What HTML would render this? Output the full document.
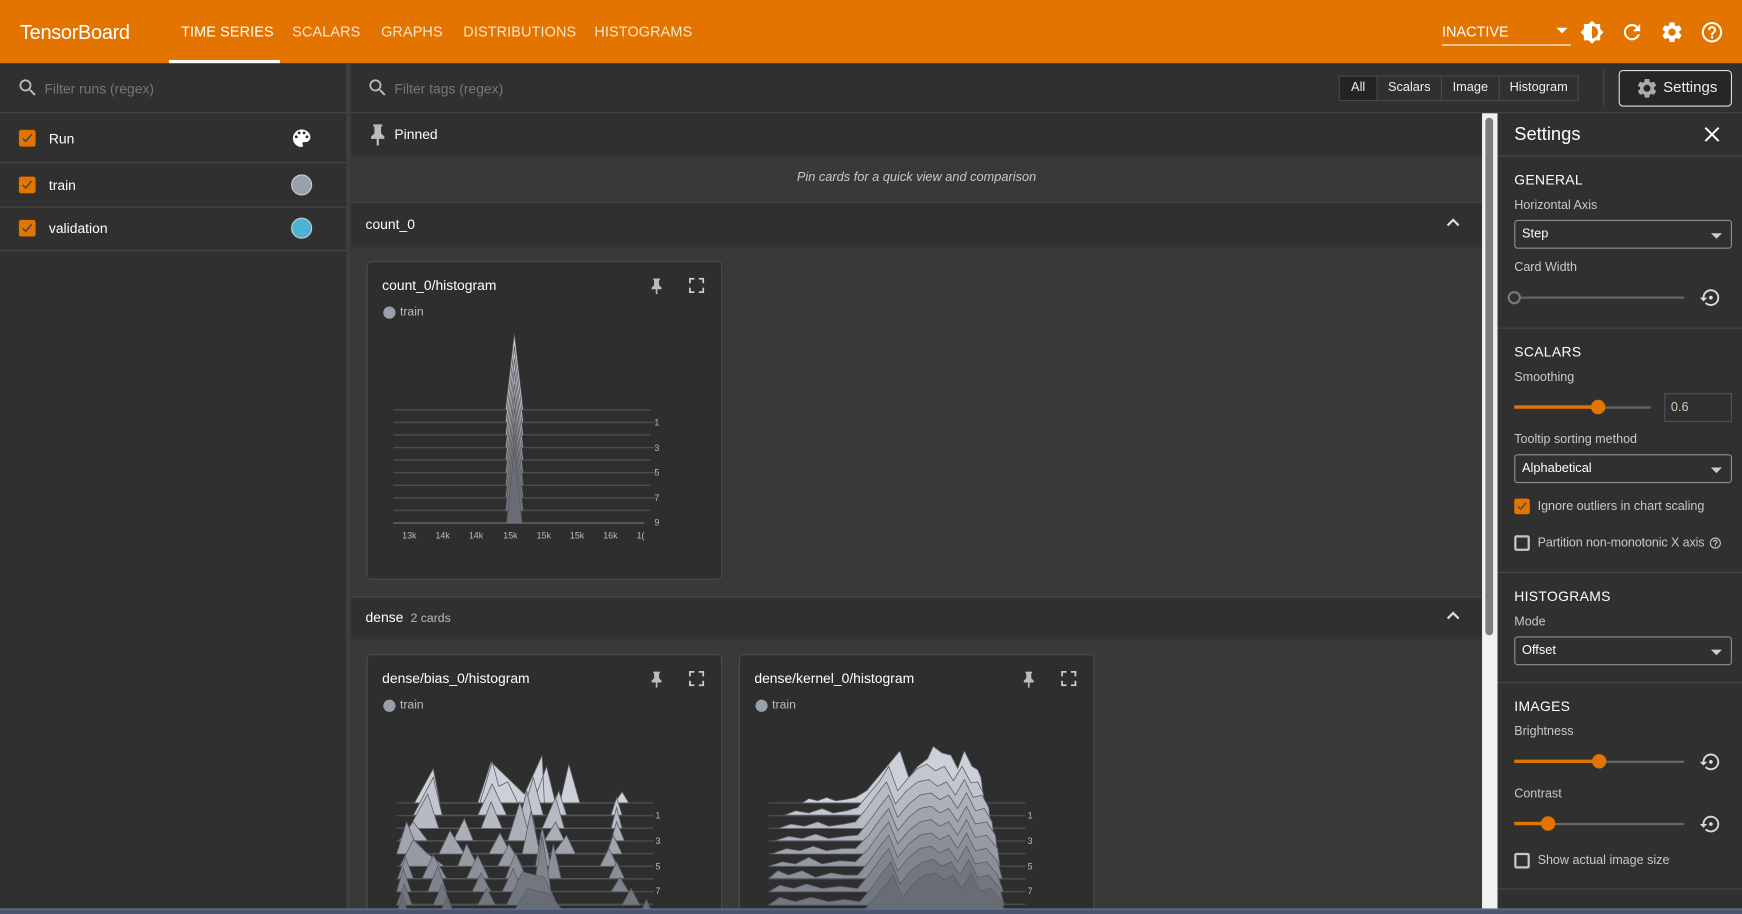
<!DOCTYPE html>
<html><head><meta charset="utf-8">
<style>
*{box-sizing:border-box;margin:0;padding:0}
html,body{width:1742px;height:914px;overflow:hidden;background:#303030;font-family:"Liberation Sans",Arial,sans-serif;color:#fff}
#w{position:absolute;left:0;top:0;width:1568px;height:823px;transform:scale(1.11097,1.11057);transform-origin:0 0;background:#303030;overflow:hidden}
.a{position:absolute}
.hdr{left:0;top:0;width:1568px;height:57px;background:#e37400}
.tab{top:21px;font-size:13px;color:#fbe3cc;letter-spacing:.1px}
.ic{fill:#fff}
.t13{font-size:12.5px}
.hl{background:#474747;height:1px}
.sec{background:#303030}
.cb{width:15px;height:15px;background:#e37400;border-radius:2px}
.cb svg{position:absolute;left:2px;top:2px}
.ecb{width:14px;height:14px;border:2px solid #c8c8c8;border-radius:2px}
.card{background:#2e2e2e;border:1px solid #4a4a4a;border-radius:4px}
.lbl{font-size:11.3px;color:#c8c8c8}
.sh{font-size:12.5px;color:#fff;letter-spacing:.3px}
.sel{border:1px solid #8a8f9a;border-radius:3px;height:26px;font-size:11.5px;padding:6px 6px;color:#fff}
.sel:after{content:"";position:absolute;right:8px;top:11px;border-left:5px solid transparent;border-right:5px solid transparent;border-top:5px solid #ccc}
.btn{top:68px;height:23px;border:1px solid #4a4a4a;font-size:11.5px;color:#eee;text-align:center;line-height:21px;background:#303030}
</style></head><body><div id="w">

<div class="a hdr"></div>
<div class="a" style="left:18px;top:19px;font-size:18px;color:#fff;letter-spacing:-.3px">TensorBoard</div>
<div class="a tab" style="left:163px;color:#fff">TIME SERIES</div>
<div class="a" style="left:152px;top:54px;width:100px;height:3px;background:#fff"></div>
<div class="a tab" style="left:263px">SCALARS</div>
<div class="a tab" style="left:343px">GRAPHS</div>
<div class="a tab" style="left:417px">DISTRIBUTIONS</div>
<div class="a tab" style="left:535px">HISTOGRAMS</div>
<div class="a" style="left:1298px;top:21px;font-size:13px">INACTIVE</div>
<div class="a" style="left:1298px;top:40px;width:116px;height:1px;background:#fff"></div>
<div class="a" style="left:1401px;top:25px;border-left:5px solid transparent;border-right:5px solid transparent;border-top:5px solid #fff"></div>
<svg class="a" style="left:1422px;top:18px" width="22" height="22" viewBox="0 0 24 24"><path class="ic" d="M20 8.690V4h-4.69L12 .69 8.69 4H4v4.69L.69 12 4 15.31V20h4.69L12 23.31 15.31 20H20v-4.69L23.31 12 20 8.69zM12 18V6c3.31 0 6 2.69 6 6s-2.690 6-6 6z"/></svg>
<svg class="a" style="left:1458px;top:18px" width="22" height="22" viewBox="0 0 24 24"><path class="ic" d="M17.65 6.35A7.96 7.96 0 0 0 12 4a8 8 0 1 0 7.73 10h-2.08A6 6 0 1 1 12 6c1.66 0 3.14.69 4.22 1.78L13 11h7V4l-2.35 2.35z"/></svg>
<svg class="a" style="left:1494px;top:18px" width="22" height="22" viewBox="0 0 24 24"><path class="ic" d="M19.14 12.94c.04-.3.06-.61.06-.94 0-.32-.02-.64-.07-.94l2.030-1.58a.49.49 0 0 0 .12-.61l-1.92-3.32a.49.49 0 0 0-.59-.22l-2.39.96c-.5-.38-1.03-.7-1.62-.94l-.36-2.54a.48.48 0 0 0-.48-.41h-3.84c-.24 0-.43.17-.47.41l-.36 2.54c-.59.24-1.13.57-1.62.94l-2.39-.96a.48.48 0 0 0-.59.22L2.74 8.87a.47.47 0 0 0 .12.61l2.03 1.58c-.05.3-.09.63-.09.94s.2.64.07.94l-2.03 1.58a.49.49 0 0 0-.12.61l1.92 3.32c.12.22.37.29.59.22l2.39-.96c.5.38 1.03.7 1.62.94l.36 2.54c.05.24.24.41.48.41h3.84c.24 0 .44-.17.47-.41l.36-2.54c.59-.24 1.13-.56 1.62-.94l2.39.96c.22.08.47 0 .59-.22l1.92-3.32a.47.47 0 0 0-.12-.61l-2.01-1.58zM12 15.6A3.6 3.6 0 1 1 12 8.4a3.6 3.6 0 0 1 0 7.2z"/></svg>
<svg class="a" style="left:1530px;top:18px" width="22" height="22" viewBox="0 0 24 24"><path class="ic" d="M11 18h2v-2h-2v2zm1-16C6.48 2 2 6.48 2 12s4.48 10 10 10 10-4.48 10-10S17.52 2 12 2zm0 18c-4.41 0-8-3.59-8-8s3.59-8 8-8 8 3.59 8 8-3.59 8-8 8zm0-14a4 4 0 0 0-4 4h2c0-1.1.9-2 2-2s2 .9 2 2c0 2-3 1.75-3 5h2c0-2.25 3-2.5 3-5a4 4 0 0 0-4-4z"/></svg>

<div class="a" style="left:0;top:57px;width:312px;height:766px;background:#303030"></div>
<div class="a" style="left:312px;top:57px;width:4px;height:766px;background:#3c3c3c;border-left:1px solid #444"></div>
<svg class="a" style="left:15px;top:69px" width="20" height="20" viewBox="0 0 24 24"><path fill="#bbb" d="M15.5 14h-.79l-.28-.27A6.47 6.47 0 0 0 16 9.5 6.5 6.5 0 1 0 9.5 16c1.61 0 3.09-.59 4.23-1.57l.27.28v.79l5 4.99L20.49 19l-4.99-5zm-6 0C7.01 14 5 11.99 5 9.5S7.01 5 9.5 5 14 7.01 14 9.5 11.990 14 9.5 14z"/></svg>
<div class="a t13" style="left:40px;top:73px;color:#777">Filter runs (regex)</div>
<div class="a hl" style="left:0;top:101px;width:312px"></div>
<div class="a cb" style="left:17px;top:117px"><svg width="11" height="11" viewBox="0 0 12 12"><path d="M1.5 6l3 3 6-7" stroke="#444" stroke-width="1.4" fill="none"/></svg></div>
<div class="a t13" style="left:44px;top:118px">Run</div>
<svg class="a" style="left:261px;top:114px" width="21" height="21" viewBox="0 0 24 24"><path fill="#fff" d="M12 3a9 9 0 0 0 0 18c.83 0 1.5-.67 1.5-1.5 0-.39-.15-.74-.39-1.01-.23-.26-.38-.61-.38-.99 0-.83.67-1.5 1.5-1.5H16c2.76 0 5-2.24 5-5 0-4.42-4.03-8-9-8zm-5.5 9a1.5 1.5 0 1 1 0-3 1.5 1.5 0 0 1 0 3zm3-4a1.5 1.5 0 1 1 0-3 1.5 1.5 0 0 1 0 3zm5 0a1.5 1.5 0 1 1 0-3 1.5 1.5 0 0 1 0 3zm3 4a1.5 1.5 0 1 1 0-3 1.5 1.5 0 0 1 0 3z"/></svg>
<div class="a hl" style="left:0;top:146px;width:312px"></div>
<div class="a cb" style="left:17px;top:159px"><svg width="11" height="11" viewBox="0 0 12 12"><path d="M1.5 6l3 3 6-7" stroke="#444" stroke-width="1.4" fill="none"/></svg></div>
<div class="a t13" style="left:44px;top:160px">train</div>
<div class="a" style="left:262px;top:157px;width:19px;height:19px;border-radius:50%;background:#9aa0ab;border:1px solid #ccc"></div>
<div class="a hl" style="left:0;top:186px;width:312px"></div>
<div class="a cb" style="left:17px;top:198px"><svg width="11" height="11" viewBox="0 0 12 12"><path d="M1.5 6l3 3 6-7" stroke="#444" stroke-width="1.4" fill="none"/></svg></div>
<div class="a t13" style="left:44px;top:199px">validation</div>
<div class="a" style="left:262px;top:196px;width:19px;height:19px;border-radius:50%;background:#4cb3d4;border:1px solid #ccc"></div>
<div class="a hl" style="left:0;top:225px;width:312px"></div>

<div class="a" style="left:316px;top:57px;width:1252px;height:44px;background:#303030"></div>
<svg class="a" style="left:330px;top:69px" width="20" height="20" viewBox="0 0 24 24"><path fill="#bbb" d="M15.5 14h-.79l-.28-.27A6.47 6.47 0 0 0 16 9.5 6.5 6.5 0 1 0 9.5 16c1.61 0 3.09-.59 4.23-1.57l.27.28v.79l5 4.99L20.49 19l-4.99-5zm-6 0C7.01 14 5 11.99 5 9.5S7.01 5 9.5 5 14 7.01 14 9.5 11.99 14 9.5 14z"/></svg>
<div class="a t13" style="left:355px;top:73px;color:#777">Filter tags (regex)</div>
<div class="a btn" style="left:1205px;width:35px;background:#232323">All</div>
<div class="a btn" style="left:1239px;width:59px">Scalars</div>
<div class="a btn" style="left:1297px;width:53px">Image</div>
<div class="a btn" style="left:1349px;width:72px">Histogram</div>
<div class="a" style="left:1443px;top:63px;width:1px;height:32px;background:#4a4a4a"></div>
<div class="a" style="left:1457px;top:63px;width:102px;height:33px;border:1px solid #ddd;border-radius:4px;background:#262626"></div>
<svg class="a" style="left:1472px;top:69px" width="21" height="21" viewBox="0 0 24 24"><path fill="#aaa" d="M19.14 12.94c.04-.3.06-.61.06-.94 0-.32-.02-.64-.07-.94l2.03-1.58a.49.49 0 0 0 .12-.61l-1.92-3.32a.49.49 0 0 0-.59-.22l-2.39.96c-.5-.38-1.03-.7-1.62-.94l-.36-2.54a.48.48 0 0 0-.48-.41h-3.84c-.24 0-.43.17-.47.41l-.36 2.54c-.59.24-1.13.57-1.62.94l-2.39-.96a.48.48 0 0 0-.59.22L2.74 8.87a.47.47 0 0 0 .12.61l2.03 1.58c-.05.3-.09.63-.09.94s.2.64.07.94l-2.03 1.58a.49.49 0 0 0-.12.61l1.92 3.32c.12.22.37.29.59.22l2.39-.96c.5.38 1.03.7 1.62.94l.36 2.54c.05.24.24.41.48.41h3.84c.24 0 .44-.17.47-.41l.36-2.54c.59-.24 1.13-.56 1.62-.94l2.39.96c.22.08.47 0 .59-.22l1.92-3.32a.47.47 0 0 0-.12-.61l-2.01-1.58zM12 15.6A3.6 3.6 0 1 1 12 8.4a3.6 3.6 0 0 1 0 7.2z"/></svg>
<div class="a" style="left:1497px;top:71px;font-size:13.5px;color:#eee">Settings</div>
<div class="a hl" style="left:316px;top:101px;width:1252px"></div>

<div class="a" style="left:316px;top:102px;width:1018px;height:721px;background:#393939"></div>
<div class="a sec" style="left:316px;top:102px;width:1018px;height:38px"></div>
<svg class="a" style="left:332px;top:111px" width="16" height="20" viewBox="0 0 16 20"><path fill="#bbb" d="M4 1h8v2h-1v6l3 3v2H9v6H7v-6H2v-2l3-3V3H4z"/></svg>
<div class="a t13" style="left:355px;top:114px">Pinned</div>
<div class="a" style="left:316px;top:140px;width:1018px;height:3px;background:#353535"></div>
<div class="a" style="left:316px;top:154px;width:1018px;text-align:center;font-size:11.5px;font-style:italic;color:#c8c8c8">Pin cards for a quick view and comparison</div>
<div class="a hl" style="left:316px;top:182px;width:1018px"></div>
<div class="a sec" style="left:316px;top:183px;width:1018px;height:37px"></div>
<div class="a t13" style="left:329px;top:195px">count_0</div>
<svg class="a" style="left:1301px;top:194px" width="14" height="12" viewBox="0 0 14 12"><path d="M2 9l5-5 5 5" stroke="#ddd" stroke-width="2" fill="none"/></svg>
<div class="a" style="left:316px;top:220px;width:1018px;height:3px;background:#343434"></div>

<div class="a card" style="left:330px;top:235px;width:320px;height:287px"></div>
<div class="a t13" style="left:344px;top:250px">count_0/histogram</div>
<svg class="a" style="left:585px;top:250px" width="12" height="15" viewBox="0 0 16 20"><path fill="#bbb" d="M4 1h8v2h-1v6l3 3v2H9v6H7v-6H2v-2l3-3V3H4z"/></svg>
<svg class="a" style="left:620px;top:250px" width="14" height="14" viewBox="0 0 14 14"><path d="M1 5V1h4M9 1h4v4M13 9v4H9M5 13H1V9" stroke="#ccc" stroke-width="1.6" fill="none"/></svg>
<div class="a" style="left:345px;top:276px;width:11px;height:11px;border-radius:50%;background:#9aa0ab"></div>
<div class="a" style="left:360px;top:275px;font-size:11px;color:#bbb">train</div>
<svg class="a" style="left:330px;top:290px" width="320" height="210" viewBox="330 290 320 210">
<g stroke="#4c4c4c" stroke-width="1.3">
<line x1="354" y1="369" x2="586" y2="369"/><line x1="354" y1="380.3" x2="590" y2="380.3"/><line x1="354" y1="391.6" x2="586" y2="391.6"/><line x1="354" y1="403" x2="590" y2="403"/><line x1="354" y1="414.3" x2="586" y2="414.3"/><line x1="354" y1="425.6" x2="590" y2="425.6"/><line x1="354" y1="437" x2="586" y2="437"/><line x1="354" y1="448.3" x2="590" y2="448.3"/><line x1="354" y1="459.6" x2="586" y2="459.6"/>
</g>
<g stroke="#555" stroke-width=".6">
<path fill="#c9ccd4" d="M455,369 L463,300 L471,369Z"/>
<path fill="#bfc3cb" d="M455,380 L463,312 L471,380Z"/>
<path fill="#b3b7c0" d="M455,392 L463,323 L471,392Z"/>
<path fill="#a8acb5" d="M455,403 L463,334 L471,403Z"/>
<path fill="#9da1aa" d="M455,414 L463,346 L471,414Z"/>
<path fill="#92969f" d="M455,426 L463,357 L471,426Z"/>
<path fill="#878b94" d="M455,437 L463,368 L471,437Z"/>
<path fill="#7c8089" d="M455,448 L463,380 L471,448Z"/>
<path fill="#72767f" d="M455,460 L463,391 L471,460Z"/>
<path fill="#686c75" d="M456,471 L463,402 L470,471Z"/>
</g>
<line x1="354" y1="471" x2="580" y2="471" stroke="#777"/>
<g fill="#bbb" font-size="8" font-family="Liberation Sans">
<text x="589" y="383">1</text><text x="589" y="406">3</text><text x="589" y="428">5</text><text x="589" y="451">7</text><text x="589" y="473">9</text>
<text x="362" y="485">13k</text><text x="392" y="485">14k</text><text x="422" y="485">14k</text><text x="453" y="485">15k</text><text x="483" y="485">15k</text><text x="513" y="485">15k</text><text x="543" y="485">16k</text><text x="573" y="485">1(</text>
</g>
</svg>

<div class="a hl" style="left:316px;top:537px;width:1018px"></div>
<div class="a sec" style="left:316px;top:538px;width:1018px;height:36px"></div>
<div class="a t13" style="left:329px;top:549px">dense <span style="font-size:11px;color:#bbb">&nbsp;2 cards</span></div>
<svg class="a" style="left:1301px;top:548px" width="14" height="12" viewBox="0 0 14 12"><path d="M2 9l5-5 5 5" stroke="#ddd" stroke-width="2" fill="none"/></svg>
<div class="a" style="left:316px;top:574px;width:1018px;height:3px;background:#343434"></div>

<div class="a card" style="left:330px;top:589px;width:320px;height:250px"></div>
<div class="a t13" style="left:344px;top:604px">dense/bias_0/histogram</div>
<svg class="a" style="left:585px;top:604px" width="12" height="15" viewBox="0 0 16 20"><path fill="#bbb" d="M4 1h8v2h-1v6l3 3v2H9v6H7v-6H2v-2l3-3V3H4z"/></svg>
<svg class="a" style="left:620px;top:604px" width="14" height="14" viewBox="0 0 14 14"><path d="M1 5V1h4M9 1h4v4M13 9v4H9M5 13H1V9" stroke="#ccc" stroke-width="1.6" fill="none"/></svg>
<div class="a" style="left:345px;top:630px;width:11px;height:11px;border-radius:50%;background:#9aa0ab"></div>
<div class="a" style="left:360px;top:629px;font-size:11px;color:#bbb">train</div>

<div class="a card" style="left:665px;top:589px;width:320px;height:250px"></div>
<div class="a t13" style="left:679px;top:604px">dense/kernel_0/histogram</div>
<svg class="a" style="left:920px;top:604px" width="12" height="15" viewBox="0 0 16 20"><path fill="#bbb" d="M4 1h8v2h-1v6l3 3v2H9v6H7v-6H2v-2l3-3V3H4z"/></svg>
<svg class="a" style="left:955px;top:604px" width="14" height="14" viewBox="0 0 14 14"><path d="M1 5V1h4M9 1h4v4M13 9v4H9M5 13H1V9" stroke="#ccc" stroke-width="1.6" fill="none"/></svg>
<div class="a" style="left:680px;top:630px;width:11px;height:11px;border-radius:50%;background:#9aa0ab"></div>
<div class="a" style="left:695px;top:629px;font-size:11px;color:#bbb">train</div>

<svg class="a" style="left:330px;top:650px" width="680" height="173" viewBox="330 650 680 173">
<g stroke="#4c4c4c" stroke-width="1.3">
<line x1="357" y1="723" x2="588" y2="723"/><line x1="357" y1="734.4" x2="588" y2="734.4"/><line x1="357" y1="745.8" x2="588" y2="745.8"/><line x1="357" y1="757.2" x2="588" y2="757.2"/><line x1="357" y1="768.6" x2="588" y2="768.6"/><line x1="357" y1="780" x2="588" y2="780"/><line x1="357" y1="791.4" x2="588" y2="791.4"/><line x1="357" y1="802.8" x2="588" y2="802.8"/><line x1="357" y1="814.2" x2="588" y2="814.2"/>
<line x1="692" y1="723" x2="923" y2="723"/><line x1="692" y1="734.4" x2="923" y2="734.4"/><line x1="692" y1="745.8" x2="923" y2="745.8"/><line x1="692" y1="757.2" x2="923" y2="757.2"/><line x1="692" y1="768.6" x2="923" y2="768.6"/><line x1="692" y1="780" x2="923" y2="780"/><line x1="692" y1="791.4" x2="923" y2="791.4"/><line x1="692" y1="802.8" x2="923" y2="802.8"/><line x1="692" y1="814.2" x2="923" y2="814.2"/>
</g>
<g stroke="#5a5d64" stroke-width=".7">
<path fill="#ccd0d8" d="M373,723 L390,692 L396,723 L432,723 L443,686 L449,708 L457,704 L466,723 L480,723 L484,712 L492,690 L500,723 L504,723 L512,688 L522,723 L553,723 L560,713 L566,723Z M430,723 L442,686 L472,715 L488,680 L490,723Z"/>
<path fill="#c2c6cf" d="M372,734 L390,700 L398,734 L430,734 L443,706 L456,734 L470,734 L480,700 L489,734 L494,734 L503,712 L510,734 L550,734 L555,718 L560,734Z"/>
<path fill="#b6bac3" d="M368,746 L385,715 L395,746 L433,746 L442,722 L452,746 L466,746 L474,712 L482,746 L488,746 L500,718 L508,746 L550,746 L555,727 L560,746Z"/>
<path fill="#abafb8" d="M359,757 L372,740 L385,757 L408,757 L418,737 L426,757 L457,757 L468,722 L478,757 L490,757 L500,740 L508,757 L550,757 L555,740 L562,757Z"/>
<path fill="#a0a4ad" d="M357,769 L366,740 L378,769 L395,769 L405,748 L418,769 L440,769 L450,750 L460,769 L470,769 L478,730 L486,769 L498,769 L510,752 L518,769 L546,769 L552,752 L560,769Z"/>
<path fill="#959aa3" d="M360,780 L372,756 L384,768 L400,780 L412,780 L420,760 L430,780 L448,780 L458,760 L470,780 L482,780 L488,745 L496,780 L540,780 L548,764 L556,780Z"/>
<path fill="#8a8f98" d="M358,791 L365,772 L372,791 L380,791 L390,770 L402,791 L420,791 L430,770 L440,791 L455,791 L464,768 L474,791 L492,791 L498,760 L505,791 L548,791 L555,776 L562,791Z"/>
<path fill="#7f848d" d="M357,803 L363,782 L370,803 L385,803 L394,780 L402,803 L425,803 L433,786 L442,803 L452,803 L462,782 L470,803 L480,803 L488,752 L496,803 L550,803 L558,790 L566,803Z"/>
<path fill="#72777f" d="M357,815 L364,796 L371,815 L390,815 L398,796 L406,815 L430,815 L438,800 L446,815 L456,815 L470,785 L490,790 L502,815 L560,815 L568,800 L576,815Z"/>
<path fill="#686d75" d="M357,825 L362,805 L368,825 L395,825 L402,808 L410,825 L460,825 L475,800 L495,805 L510,825 L575,825 L582,810 L588,825Z"/>
</g>
<g stroke="#5a5d64" stroke-width=".7">
<path fill="#ccd0d8" d="M722,723 L728,719 L736,721 L744,718 L752,721 L760,720 L770,718 L780,712 L790,700 L800,688 L810,676 L818,700 L826,690 L835,683 L840,672 L848,678 L856,680 L862,692 L868,676 L875,690 L880,693 L883,700 L886,723Z"/>
<path fill="#c2c6cf" d="M706,734 L716,730 L728,732 L740,728 L750,732 L762,730 L772,727 L782,715 L792,703 L800,690 L808,712 L818,700 L826,692 L834,688 L842,694 L850,690 L858,703 L866,690 L874,705 L880,704 L885,714 L888,734Z"/>
<path fill="#b6bac3" d="M700,746 L712,742 L724,744 L736,740 L746,744 L760,742 L770,740 L780,728 L790,714 L798,704 L806,724 L816,712 L826,704 L836,702 L844,708 L852,704 L860,716 L868,702 L876,718 L884,716 L890,727 L892,746Z"/>
<path fill="#abafb8" d="M697,757 L710,753 L722,755 L734,751 L746,755 L760,753 L772,752 L782,740 L792,726 L800,716 L808,736 L818,724 L828,716 L838,714 L846,720 L854,716 L862,728 L870,714 L878,730 L886,728 L893,740 L895,757Z"/>
<path fill="#a0a4ad" d="M694,769 L708,764 L720,766 L732,762 L744,766 L758,764 L770,764 L782,752 L792,738 L800,728 L808,748 L818,736 L828,728 L838,726 L846,732 L854,728 L862,740 L870,726 L878,742 L888,740 L896,752 L898,769Z"/>
<path fill="#959aa3" d="M692,780 L704,776 L716,778 L728,772 L740,778 L756,775 L770,776 L782,764 L792,750 L800,740 L808,760 L818,748 L828,740 L838,738 L846,744 L854,740 L862,752 L870,738 L878,754 L888,752 L898,764 L900,780Z"/>
<path fill="#8a8f98" d="M692,791 L700,784 L710,788 L722,784 L734,790 L748,786 L760,788 L772,788 L782,776 L792,762 L800,752 L808,772 L818,760 L828,752 L838,750 L846,756 L854,752 L862,764 L870,750 L878,766 L888,764 L898,776 L902,791Z"/>
<path fill="#7f848d" d="M692,803 L702,797 L714,800 L726,796 L740,800 L756,798 L772,800 L782,788 L792,774 L800,764 L808,784 L818,772 L828,764 L838,762 L846,768 L854,764 L862,776 L870,762 L878,778 L888,776 L898,788 L903,803Z"/>
<path fill="#72777f" d="M692,815 L702,808 L716,812 L730,808 L746,812 L760,810 L774,812 L784,800 L794,786 L802,776 L810,796 L820,784 L830,776 L840,774 L848,780 L856,776 L864,788 L872,774 L880,790 L890,788 L900,800 L904,815Z"/>
<path fill="#686d75" d="M692,826 L704,820 L720,822 L740,820 L760,822 L776,822 L786,810 L796,798 L804,788 L812,808 L822,796 L832,788 L842,786 L850,792 L858,788 L866,800 L874,786 L882,802 L892,800 L902,812 L905,826Z"/>
</g>
<g fill="#bbb" font-size="8" font-family="Liberation Sans">
<text x="590" y="737">1</text><text x="590" y="760">3</text><text x="590" y="783">5</text><text x="590" y="805">7</text>
<text x="925" y="737">1</text><text x="925" y="760">3</text><text x="925" y="783">5</text><text x="925" y="805">7</text>
</g>
</svg>

<div class="a" style="left:1334px;top:102px;width:14px;height:721px;background:#f1f1f1"></div>
<div class="a" style="left:1337px;top:106px;width:7px;height:466px;border-radius:4px;background:#7c7c7c"></div>

<div class="a" style="left:1348px;top:102px;width:220px;height:721px;background:#303030"></div>
<div class="a" style="left:1363px;top:112px;font-size:16.5px">Settings</div>
<svg class="a" style="left:1533px;top:113px" width="16" height="16" viewBox="0 0 16 16"><path d="M2 2l12 12M14 2L2 14" stroke="#fff" stroke-width="1.8"/></svg>
<div class="a hl" style="left:1348px;top:140px;width:220px"></div>
<div class="a sh" style="left:1363px;top:155px">GENERAL</div>
<div class="a lbl" style="left:1363px;top:179px">Horizontal Axis</div>
<div class="a sel" style="left:1363px;top:198px;width:196px">Step</div>
<div class="a lbl" style="left:1363px;top:235px">Card Width</div>
<div class="a" style="left:1363px;top:267px;width:153px;height:2px;background:#666"></div>
<div class="a" style="left:1357px;top:262px;width:12px;height:12px;border-radius:50%;border:2px solid #777;background:#303030"></div>
<svg class="a" style="left:1530px;top:258px" width="20" height="20" viewBox="0 0 24 24"><path fill="#ddd" d="M12 3a9 9 0 0 0-9 9H0l4 4 4-4H5a7 7 0 1 1 2.05 4.95l-1.42 1.42A9 9 0 1 0 12 3zm2 9a2 2 0 1 0-4 0 2 2 0 0 0 4 0z"/></svg>
<div class="a hl" style="left:1348px;top:295px;width:220px"></div>
<div class="a sh" style="left:1363px;top:310px">SCALARS</div>
<div class="a lbl" style="left:1363px;top:334px">Smoothing</div>
<div class="a" style="left:1363px;top:366px;width:123px;height:2px;background:#666"></div>
<div class="a" style="left:1363px;top:365px;width:75px;height:3px;background:#e37400"></div>
<div class="a" style="left:1432px;top:360px;width:13px;height:13px;border-radius:50%;background:#e37400"></div>
<div class="a" style="left:1498px;top:354px;width:61px;height:26px;border:1px solid #4a5366;font-size:11.5px;color:#ccc;padding:6px 5px">0.6</div>
<div class="a lbl" style="left:1363px;top:390px">Tooltip sorting method</div>
<div class="a sel" style="left:1363px;top:409px;width:196px">Alphabetical</div>
<div class="a cb" style="left:1363px;top:449px;width:14px;height:14px"><svg width="10" height="10" viewBox="0 0 12 12"><path d="M1.5 6l3 3 6-7" stroke="#444" stroke-width="1.4" fill="none"/></svg></div>
<div class="a lbl" style="left:1384px;top:450px">Ignore outliers in chart scaling</div>
<div class="a ecb" style="left:1363px;top:482px"></div>
<div class="a lbl" style="left:1384px;top:483px;letter-spacing:-.1px">Partition non-monotonic X axis</div>
<svg class="a" style="left:1538px;top:483px" width="12" height="12" viewBox="0 0 24 24"><path fill="#ccc" d="M11 18h2v-2h-2v2zm1-16C6.48 2 2 6.48 2 12s4.48 10 10 10 10-4.48 10-10S17.52 2 12 2zm0 18c-4.41 0-8-3.59-8-8s3.59-8 8-8 8 3.59 8 8-3.59 8-8 8zm0-14a4 4 0 0 0-4 4h2c0-1.1.9-2 2-2s2 .9 2 2c0 2-3 1.75-3 5h2c0-2.25 3-2.5 3-5a4 4 0 0 0-4-4z"/></svg>
<div class="a hl" style="left:1348px;top:515px;width:220px"></div>
<div class="a sh" style="left:1363px;top:530px">HISTOGRAMS</div>
<div class="a lbl" style="left:1363px;top:554px">Mode</div>
<div class="a sel" style="left:1363px;top:573px;width:196px">Offset</div>
<div class="a hl" style="left:1348px;top:614px;width:220px"></div>
<div class="a sh" style="left:1363px;top:629px">IMAGES</div>
<div class="a lbl" style="left:1363px;top:653px">Brightness</div>
<div class="a" style="left:1363px;top:685px;width:153px;height:2px;background:#666"></div>
<div class="a" style="left:1363px;top:684px;width:77px;height:3px;background:#e37400"></div>
<div class="a" style="left:1433px;top:679px;width:13px;height:13px;border-radius:50%;background:#e37400"></div>
<svg class="a" style="left:1530px;top:676px" width="20" height="20" viewBox="0 0 24 24"><path fill="#ddd" d="M12 3a9 9 0 0 0-9 9H0l4 4 4-4H5a7 7 0 1 1 2.05 4.95l-1.42 1.42A9 9 0 1 0 12 3zm2 9a2 2 0 1 0-4 0 2 2 0 0 0 4 0z"/></svg>
<div class="a lbl" style="left:1363px;top:709px">Contrast</div>
<div class="a" style="left:1363px;top:741px;width:153px;height:2px;background:#666"></div>
<div class="a" style="left:1363px;top:740px;width:30px;height:3px;background:#e37400"></div>
<div class="a" style="left:1387px;top:735px;width:13px;height:13px;border-radius:50%;background:#e37400"></div>
<svg class="a" style="left:1530px;top:732px" width="20" height="20" viewBox="0 0 24 24"><path fill="#ddd" d="M12 3a9 9 0 0 0-9 9H0l4 4 4-4H5a7 7 0 1 1 2.05 4.95l-1.42 1.42A9 9 0 1 0 12 3zm2 9a2 2 0 1 0-4 0 2 2 0 0 0 4 0z"/></svg>
<div class="a ecb" style="left:1363px;top:768px"></div>
<div class="a lbl" style="left:1384px;top:769px">Show actual image size</div>
<div class="a hl" style="left:1348px;top:800px;width:220px"></div>

<div class="a" style="left:0;top:818px;width:1568px;height:5px;background:#4b5670;border-top:1px solid #6a7590"></div>
</div></body></html>
